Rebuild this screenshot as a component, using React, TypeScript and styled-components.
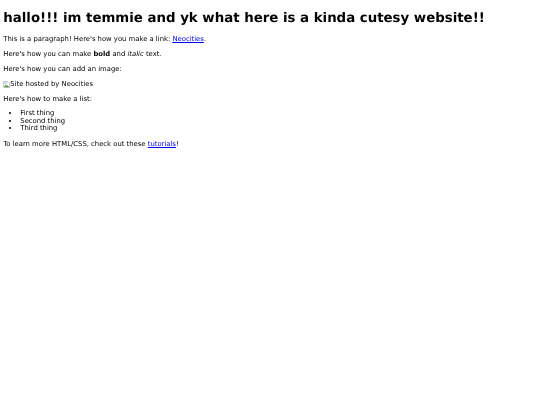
import React from "react";
import styled, { createGlobalStyle } from "styled-components";

const Global = createGlobalStyle`
  html, body { margin: 0; padding: 0; background: #fff; }
  body {
    font-family: "DejaVu Sans", sans-serif;
    font-size: 6.83px;
    line-height: 8px;
    color: #000;
    text-rendering: geometricPrecision;
  }
`;

const Page = styled.main`
  padding: 0 3.3px;
  display: flow-root;
  filter: blur(0.25px);
`;

const Heading = styled.h1`
  font-size: 13.33px;
  line-height: 16px;
  font-weight: 700;
  margin: 11px 0 8px;
`;

const Paragraph = styled.p`
  margin: 7px 0;
`;

const TextLink = styled.a`
  color: #0000ee;
  text-decoration: underline;
`;

const BrokenImage = styled.span`
  display: inline-flex;
  align-items: center;
  height: 8px;
  vertical-align: top;
`;

const List = styled.ul`
  margin: 7.25px 0;
  padding: 0 0 0 17px;
  line-height: 7.5px;
`;

export default function App() {
  return (
    <Page>
      <Global />
      <Heading>hallo!!! im temmie and yk what here is a kinda cutesy website!!</Heading>
      <Paragraph>
        This is a paragraph! Here's how you make a link: <TextLink href="#">Neocities</TextLink>.
      </Paragraph>
      <Paragraph>
        Here's how you can make <strong>bold</strong> and <em>italic</em> text.
      </Paragraph>
      <Paragraph>Here's how you can add an image:</Paragraph>
      <Paragraph>
        <BrokenImage>
          <svg width="7" height="7" viewBox="0 0 16 16">
            <path d="M1 1h10l4 4v10H1z" fill="#fff" stroke="#a8a8a8" strokeWidth="1.500" />
            <path d="M2 2h8v5H2z" fill="#c8daf5" />
            <path d="M2 14l4-6 3 3 2-2 3 5z" fill="#5a9e4b" />
          </svg>
          Site hosted by Neocities
        </BrokenImage>
      </Paragraph>
      <Paragraph>Here's how to make a list:</Paragraph>
      <List>
        <li>First thing</li>
        <li>Second thing</li>
        <li>Third thing</li>
      </List>
      <Paragraph>
        To learn more HTML/CSS, check out these <TextLink href="#">tutorials</TextLink>!
      </Paragraph>
    </Page>
  );
}
